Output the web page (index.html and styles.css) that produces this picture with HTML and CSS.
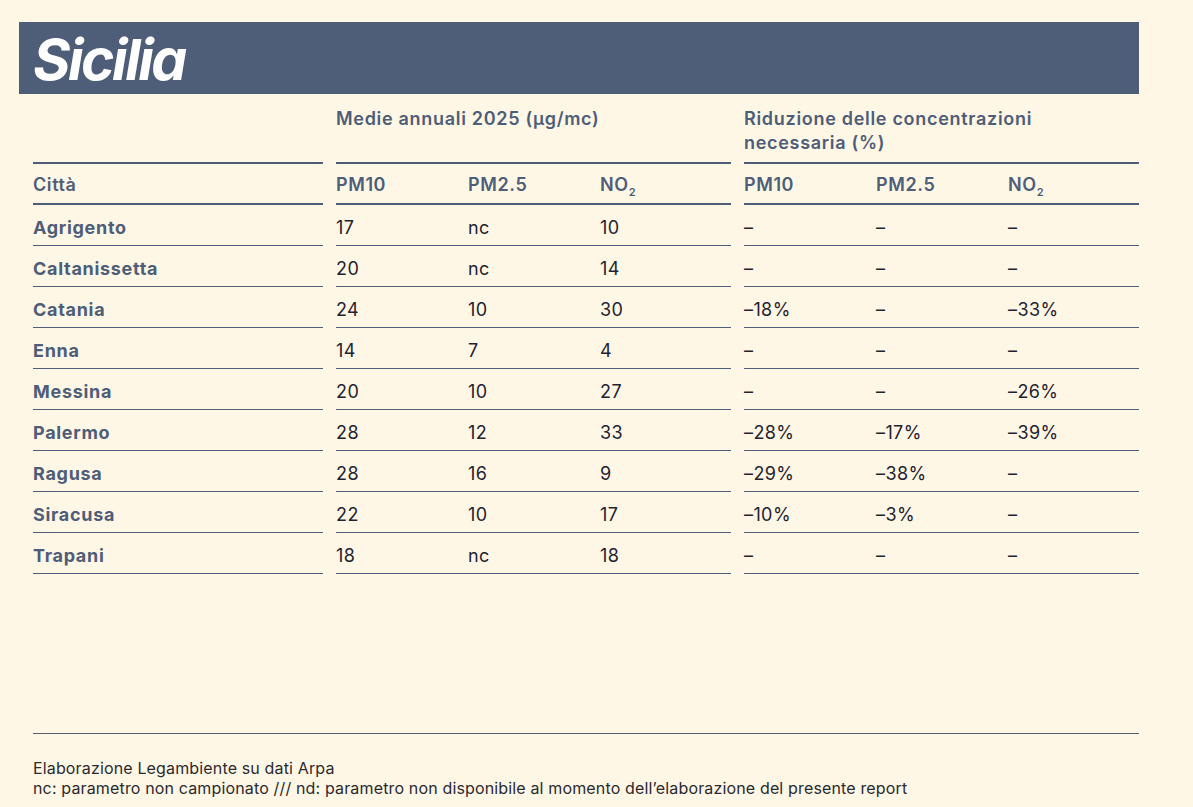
FILE: index.html
```html
<!DOCTYPE html>
<html lang="it">
<head>
<meta charset="utf-8">
<title>Sicilia</title>
<link rel="stylesheet" href="styles.css">
</head>
<body>
<div class="page">
  <header class="banner"><h1 class="title">Sicilia</h1></header>
  <div class="table">
    <div class="row group-row">
      <div class="seg"></div>
      <div class="seg"><span class="group-title">Medie annuali 2025 (µg/mc)</span></div>
      <div class="seg"><span class="group-title">Riduzione delle concentrazioni<br>necessaria (%)</span></div>
    </div>
    <div class="row head-row">
      <div class="seg"><span>Città</span></div>
      <div class="seg three"><span>PM10</span><span>PM2.5</span><span>NO<sub>2</sub></span></div>
      <div class="seg three"><span>PM10</span><span>PM2.5</span><span>NO<sub>2</sub></span></div>
    </div>
    <div class="row data-row">
      <div class="seg city">Agrigento</div>
      <div class="seg three"><span>17</span><span>nc</span><span>10</span></div>
      <div class="seg three"><span>–</span><span>–</span><span>–</span></div>
    </div>
    <div class="row data-row">
      <div class="seg city">Caltanissetta</div>
      <div class="seg three"><span>20</span><span>nc</span><span>14</span></div>
      <div class="seg three"><span>–</span><span>–</span><span>–</span></div>
    </div>
    <div class="row data-row">
      <div class="seg city">Catania</div>
      <div class="seg three"><span>24</span><span>10</span><span>30</span></div>
      <div class="seg three"><span>–18%</span><span>–</span><span>–33%</span></div>
    </div>
    <div class="row data-row">
      <div class="seg city">Enna</div>
      <div class="seg three"><span>14</span><span>7</span><span>4</span></div>
      <div class="seg three"><span>–</span><span>–</span><span>–</span></div>
    </div>
    <div class="row data-row">
      <div class="seg city">Messina</div>
      <div class="seg three"><span>20</span><span>10</span><span>27</span></div>
      <div class="seg three"><span>–</span><span>–</span><span>–26%</span></div>
    </div>
    <div class="row data-row">
      <div class="seg city">Palermo</div>
      <div class="seg three"><span>28</span><span>12</span><span>33</span></div>
      <div class="seg three"><span>–28%</span><span>–17%</span><span>–39%</span></div>
    </div>
    <div class="row data-row">
      <div class="seg city">Ragusa</div>
      <div class="seg three"><span>28</span><span>16</span><span>9</span></div>
      <div class="seg three"><span>–29%</span><span>–38%</span><span>–</span></div>
    </div>
    <div class="row data-row">
      <div class="seg city">Siracusa</div>
      <div class="seg three"><span>22</span><span>10</span><span>17</span></div>
      <div class="seg three"><span>–10%</span><span>–3%</span><span>–</span></div>
    </div>
    <div class="row data-row">
      <div class="seg city">Trapani</div>
      <div class="seg three"><span>18</span><span>nc</span><span>18</span></div>
      <div class="seg three"><span>–</span><span>–</span><span>–</span></div>
    </div>
  </div>
  <footer class="notes">
    <p>Elaborazione Legambiente su dati Arpa</p>
    <p>nc: parametro non campionato /// nd: parametro non disponibile al momento dell’elaborazione del presente report</p>
  </footer>
</div>
</body>
</html>
```

FILE: styles.css
```css
* { box-sizing: border-box; }
html, body { margin: 0; padding: 0; }
body {
  background: #fff7e5;
  font-family: Inter, "Liberation Sans", sans-serif;
  color: #1f2230;
  width: 1193px;
  height: 807px;
  overflow: hidden;
}
.page {
  padding-top: 22px;
}
.banner {
  margin-left: 19px;
  width: 1120px;
  height: 72px;
  background: #4e5d78;
  display: flex;
  align-items: center;
  padding-left: 14px;
}
.title {
  margin: 0;
  color: #ffffff;
  font-size: 57px;
  font-style: italic;
  font-weight: 700;
  letter-spacing: -2.4px;
  line-height: 1;
  padding-top: 3px;
}
.table {
  margin-left: 33px;
  width: 1106px;
}
.row {
  display: grid;
  grid-template-columns: 290px 395px 395px;
  column-gap: 13px;
}
.seg {
  display: flex;
  align-items: center;
}
.three {
  display: grid;
  grid-template-columns: 132px 132px 131px;
  align-items: center;
}
.group-row .seg {
  align-items: flex-start;
  padding: 13px 0 7px;
  height: 70px;
  border-bottom: 2px solid #4e5d78;
}
.group-title {
  color: #4e5d78;
  font-weight: 600;
  font-size: 18px;
  letter-spacing: 0.7px;
  line-height: 24px;
}
.head-row .seg {
  height: 41px;
  padding-top: 1px;
  border-bottom: 2px solid #4e5d78;
  color: #4e5d78;
  font-weight: 600;
  font-size: 18px;
  letter-spacing: 0.6px;
}
.head-row sub {
  font-size: 11px;
  vertical-align: -5px;
  line-height: 0;
  letter-spacing: 0;
}
.data-row .seg {
  height: 41px;
  padding-top: 4px;
  border-bottom: 1px solid #4e5d78;
  font-size: 18px;
  letter-spacing: 0.4px;
}
.data-row .city {
  color: #4e5d78;
  font-weight: 700;
  letter-spacing: 0.7px;
}
.notes {
  margin: 159px 0 0 33px;
  width: 1106px;
  border-top: 1px solid #5b6070;
  padding-top: 24px;
  font-size: 16px;
  letter-spacing: 0.15px;
  line-height: 20px;
  color: #2a2a30;
}
.notes p { margin: 0; }
```
